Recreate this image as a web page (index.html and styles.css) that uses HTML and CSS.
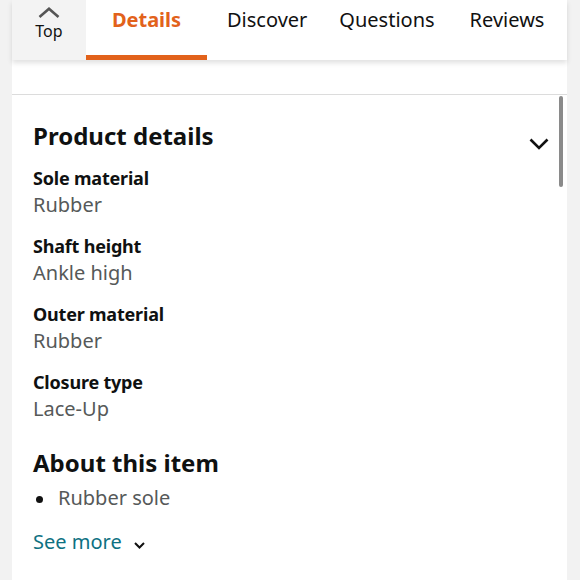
FILE: index.html
```html
<!DOCTYPE html>
<html>
<head>
<meta charset="utf-8">
<link rel="stylesheet" href="styles.css">
</head>
<body>
<div class="page">
  <nav class="tabs">
    <div class="top-btn">
      <svg class="top-icon" width="22" height="11" viewBox="0 0 22 11"><path d="M1.5 10 L11 1.8 L20.5 10" fill="none" stroke="#555" stroke-width="2.6"/></svg>
      <span class="top-label">Top</span>
    </div>
    <div class="tab active">Details</div>
    <div class="tab">Discover</div>
    <div class="tab">Questions</div>
    <div class="tab">Reviews</div>
  </nav>
  <div class="spacer"></div>
  <section class="panel">
    <div class="scrollbar"></div>
    <div class="head-row">
      <h2 class="heading">Product details</h2>
      <svg class="chev" width="20" height="12" viewBox="0 0 20 12"><path d="M1.5 1.5 L10 10 L18.5 1.5" fill="none" stroke="#111" stroke-width="2.6"/></svg>
    </div>
    <div class="item"><div class="label">Sole material</div><div class="value">Rubber</div></div>
    <div class="item"><div class="label">Shaft height</div><div class="value">Ankle high</div></div>
    <div class="item"><div class="label">Outer material</div><div class="value">Rubber</div></div>
    <div class="item"><div class="label">Closure type</div><div class="value">Lace-Up</div></div>
    <h2 class="heading about">About this item</h2>
    <ul class="bullets"><li>Rubber sole</li></ul>
    <div class="see-more">See more <svg class="small-chev" width="11" height="7" viewBox="0 0 11 7"><path d="M1 1 L5.5 5.5 L10 1" fill="none" stroke="#111" stroke-width="2"/></svg></div>
  </section>
</div>
</body>
</html>
```
FILE: styles.css
```css
html, body {
  margin: 0;
  padding: 0;
  background: #f2f2f2;
  font-family: "Noto Sans", "Open Sans", sans-serif;
  color: #0f1111;
}
.page {
  margin-left: 12px;
  width: 555px;
  min-height: 580px;
  background: #fff;
}
.tabs {
  display: flex;
  height: 60px;
  background: #fff;
  box-shadow: 0 3px 5px rgba(0,0,0,0.12);
  position: relative;
  z-index: 1;
}
.top-btn {
  width: 74px;
  background: #f3f3f3;
  display: flex;
  flex-direction: column;
  align-items: center;
  padding-top: 7px;
  box-sizing: border-box;
}
.top-icon { display: block; }
.top-label {
  font-size: 16px;
  line-height: 20px;
  color: #111;
  margin-top: 3px;
}
.tab {
  font-size: 20px;
  line-height: 40px;
  color: #111;
  padding: 0 16px;
  box-sizing: border-box;
}
.tab.active {
  width: 121px;
  text-align: center;
  color: #e2621b;
  font-weight: 700;
  border-bottom: 5px solid #e2621b;
  height: 60px;
}
.tab:nth-child(3) { padding-left: 20px; }
.tab:nth-child(4) { padding-left: 16px; }
.tab:nth-child(5) { padding-left: 19px; }
.spacer {
  height: 34px;
  border-bottom: 1px solid #dcdcdc;
}
.panel {
  position: relative;
  padding: 25px 21px 0 21px;
}
.scrollbar {
  position: absolute;
  right: 4px;
  top: 1px;
  width: 4px;
  height: 91px;
  background: #8a8a8a;
  border-radius: 2px;
}
.head-row {
  display: flex;
  justify-content: space-between;
  align-items: center;
  margin-bottom: 14px;
}
.heading {
  margin: 0;
  font-size: 24px;
  line-height: 32px;
  font-weight: 700;
}
.chev { margin-right: -3px; margin-top: 15px; }
.item { margin-bottom: 14px; }
.label {
  font-size: 18px;
  line-height: 24px;
  font-weight: 700;
  letter-spacing: -0.2px;
}
.value {
  font-size: 20px;
  line-height: 30px;
  color: #565959;
}
.about { margin-top: 23px; }
.bullets {
  margin: 4px 0 0 0;
  padding: 0 0 0 25px;
  list-style: none;
}
.bullets li {
  position: relative;
  font-size: 20px;
  line-height: 30px;
  color: #565959;
}
.bullets li::before {
  content: "";
  position: absolute;
  left: -22px;
  top: 13px;
  width: 7px;
  height: 7px;
  border-radius: 50%;
  background: #111;
}
.see-more {
  margin-top: 14px;
  font-size: 20px;
  line-height: 30px;
  color: #0e7182;
  display: flex;
  align-items: center;
  gap: 12px;
}
.small-chev { margin-top: 6px; }
```
